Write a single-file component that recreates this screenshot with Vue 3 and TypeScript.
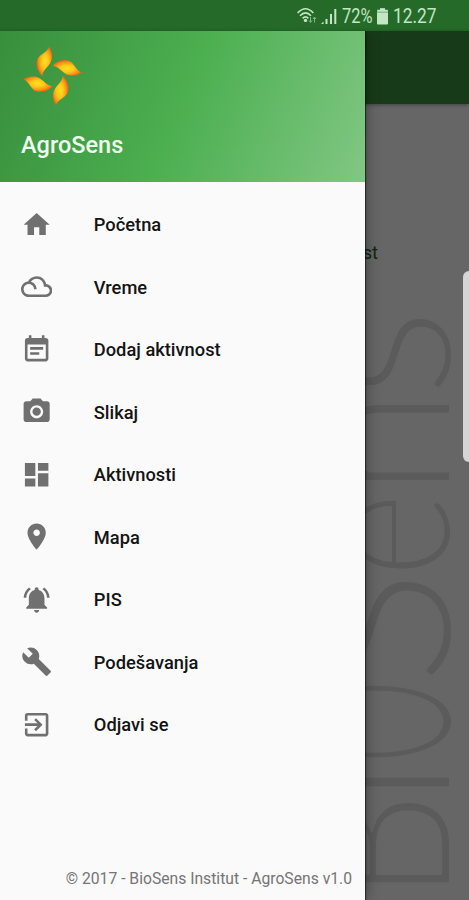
<script setup lang="ts">
interface MenuItem {
  label: string
  path: string
}

interface Mark {
  char: string
  start: number
  length: number
  size: number
}

const items: MenuItem[] = [
  { label: 'Početna', path: 'M10 20v-6h4v6h5v-8h3L12 3 2 12h3v8z' },
  {
    label: 'Vreme',
    path: 'M19.35 10.04C18.67 6.59 15.64 4 12 4 9.11 4 6.61 5.64 5.36 8.04 2.35 8.36 0 10.9 0 14c0 3.31 2.69 6 6 6h13c2.76 0 5-2.24 5-5 0-2.64-2.05-4.78-4.65-4.96zM19 18H6c-2.21 0-4-1.79-4-4s1.79-4 4-4 4 1.79 4 4h2c0-2.76-1.86-5.08-4.4-5.78C8.61 6.88 10.2 6 12 6c3.03 0 5.5 2.47 5.5 5.5v.5H19c1.65 0 3 1.35 3 3s-1.35 3-3 3z',
  },
  {
    label: 'Dodaj aktivnost',
    path: 'M14 14H7v2h7v-2zm5-11h-1V1h-2v2H8V1H6v2H5c-1.11 0-1.99.9-1.99 2L3 19c0 1.1.89 2 2 2h14c1.1 0 2-.9 2-2V5c0-1.1-.9-2-2-2zm0 16H5V8h14v11zm-2-9H7v2h10v-2z',
  },
  {
    label: 'Slikaj',
    path: 'M12 8.8a3.2 3.2 0 1 0 0 6.4 3.2 3.2 0 0 0 0-6.4zM9 2L7.17 4H4c-1.1 0-2 .9-2 2v12c0 1.1.9 2 2 2h16c1.1 0 2-.9 2-2V6c0-1.1-.9-2-2-2h-3.17L15 2H9zm3 15c-2.76 0-5-2.24-5-5s2.24-5 5-5 5 2.24 5 5-2.24 5-5 5z',
  },
  { label: 'Aktivnosti', path: 'M3 13h8V3H3v10zm0 8h8v-6H3v6zm10 0h8V11h-8v10zm0-18v6h8V3h-8z' },
  {
    label: 'Mapa',
    path: 'M12 2C8.13 2 5 5.13 5 9c0 5.25 7 13 7 13s7-7.75 7-13c0-3.87-3.13-7-7-7zm0 9.5c-1.38 0-2.5-1.12-2.5-2.5s1.12-2.5 2.5-2.5 2.5 1.12 2.5 2.5-1.12 2.5-2.5 2.5z',
  },
  {
    label: 'PIS',
    path: 'M7.58 4.08L6.15 2.65C3.75 4.48 2.17 7.3 2.03 10.5h2c.15-2.65 1.51-4.97 3.55-6.42zm12.39 6.42h2c-.15-3.2-1.73-6.02-4.12-7.85l-1.42 1.43c2.02 1.45 3.39 3.77 3.54 6.42zM18 11c0-3.07-1.64-5.64-4.5-6.32V4c0-.83-.67-1.5-1.5-1.5s-1.5.67-1.5 1.5v.68C7.63 5.36 6 7.92 6 11v5l-2 2v1h16v-1l-2-2v-5zm-6 11c1.1 0 2-.9 2-2h-4c0 1.1.9 2 2 2z',
  },
  {
    label: 'Podešavanja',
    path: 'M22.7 19l-9.1-9.1c.9-2.3.4-5-1.5-6.9-2-2-5-2.4-7.4-1.3L9 6 6 9 1.6 4.7C.4 7.1.9 10.1 2.9 12.1c1.9 1.9 4.6 2.4 6.9 1.5l9.1 9.1c.4.4 1 .4 1.4 0l2.3-2.3c.5-.4.5-1.1.1-1.4z',
  },
  {
    label: 'Odjavi se',
    path: 'M10.09 15.59L11.5 17l5-5-5-5-1.41 1.41L12.67 11H3v2h9.67l-2.58 2.59zM19 3H5c-1.11 0-2 .9-2 2v4h2V5h14v14H5v-4H3v4c0 1.1.89 2 2 2h14c1.1 0 2-.9 2-2V5c0-1.1-.9-2-2-2z',
  },
]

// Watermark letters; start is measured upwards from the bottom edge of the screen.
const marks: Mark[] = [
  { char: 'B', start: -1, length: 109, size: 215 },
  { char: 'I', start: 92, length: 52, size: 215 },
  { char: 'O', start: 136, length: 85, size: 215 },
  { char: 'S', start: 214, length: 117, size: 215 },
  { char: 'e', start: 322, length: 86, size: 195 },
  { char: 'n', start: 403, length: 108, size: 215 },
  { char: 's', start: 502, length: 90, size: 215 },
]

const petals: number[] = [0, 90, 180, 270]
</script>

<template>
  <div class="screen">
    <header class="status">
      <svg class="wifi" viewBox="0 0 20 18">
        <g fill="none" stroke="#c3e6c4" stroke-width="1.6">
          <path d="M.6 6Q8.500 -2.500 16.400 6" />
          <path d="M3 8.800Q8.500 3 14 8.800" />
          <path d="M5.600 11.400Q8.500 8.400 11.400 11.400" />
        </g>
        <circle cx="8.500" cy="13.400" r="1.700" fill="#c3e6c4" />
        <path d="M13.5 10v5M12 13.500l1.5 2 1.5-2M17.5 15.500v-5M16 12l1.500-2 1.500 2" fill="none" stroke="#80b982" />
      </svg>
      <svg class="signal" viewBox="0 0 16 17">
        <path d="M0 16h2.500v-2.500zM4.500 16h2v-5h-2zM9 16h2V6H9zM13.300 16h2V1h-2z" fill="#c3e6c4" />
      </svg>
      <span class="percent">72%</span>
      <svg class="battery" viewBox="0 0 11 17">
        <path d="M3 0h5v2h3v4H0V2h3z" fill="#8fbf91" />
        <path d="M3 .5h5v1.300h2.500V3.500H.5V1.800H3zM0 5h11v10.500a1 1 0 0 1-1 1H1a1 1 0 0 1-1-1z" fill="#c3e6c4" />
      </svg>
      <span class="clock">12.27</span>
    </header>

    <main class="stage">
      <section class="page">
        <div class="toolbar"></div>
        <div class="content">
          <p class="caption">Dodaj aktivnost</p>
        </div>
        <svg class="watermark" viewBox="0 0 469 900">
          <g transform="translate(450 900) rotate(-90)">
            <text
              v-for="(m, i) in marks"
              :key="i"
              :x="m.start"
              y="0"
              :font-size="m.size"
              :textLength="m.length"
              lengthAdjust="spacingAndGlyphs"
            >{{ m.char }}</text>
          </g>
        </svg>
        <div class="edge-handle"></div>
      </section>

      <aside class="drawer">
        <div class="banner">
          <svg class="logo" viewBox="0 0 62 62">
            <defs>
              <radialGradient id="petal" cx="0.55" cy="0.5" r="0.56">
                <stop offset="0" stop-color="#ffe11a" />
                <stop offset="0.4" stop-color="#ffc81a" />
                <stop offset="0.75" stop-color="#f98f14" />
                <stop offset="1" stop-color="#ec5a12" />
              </radialGradient>
            </defs>
            <path
              v-for="angle in petals"
              :key="angle"
              d="M28.300 1.500C31 7 32.300 13.500 29 18.500C26 23 22 25 21.300 31.300C17.500 27 14 21 16.300 14.500C18.500 9 26 8 28.300 1.500Z"
              fill="url(#petal)"
              :transform="`rotate(${angle} 31.5 31)`"
            />
          </svg>
          <h1 class="name">AgroSens</h1>
        </div>
        <nav class="menu">
          <a v-for="item in items" :key="item.label" class="item">
            <svg class="icon" viewBox="0 0 24 24"><path :d="item.path" /></svg>
            <span>{{ item.label }}</span>
          </a>
        </nav>
        <footer class="foot">© 2017 - BioSens Institut - AgroSens v1.0</footer>
      </aside>
    </main>
  </div>
</template>

<style>
body {
  margin: 0;
  overflow: hidden;
}
</style>

<style scoped>
.screen {
  width: 469px;
  height: 900px;
  display: flex;
  flex-direction: column;
  overflow: hidden;
  font-family: Roboto, "Noto Sans", sans-serif;
  background: #666;
}
.status {
  height: 31px;
  flex: none;
  box-sizing: border-box;
  padding: 1px 33px 0 0;
  display: flex;
  align-items: center;
  justify-content: flex-end;
  background: #256a29;
  color: #c3e6c4;
  font-size: 20px;
  line-height: 30px;
}
.wifi {
  width: 20px;
  height: 18px;
  margin-right: 4px;
}
.signal {
  width: 16px;
  height: 17px;
  margin-right: 5px;
}
.percent {
  width: 31px;
  white-space: nowrap;
  transform: scaleX(0.82);
  transform-origin: left;
}
.battery {
  width: 11px;
  height: 17px;
  margin: 0 5px 0 4px;
}
.clock {
  width: 43px;
  white-space: nowrap;
  transform: scaleX(0.865);
  transform-origin: left;
}
.stage {
  position: relative;
  flex: 1;
}
.page {
  height: 869px;
}
.toolbar {
  height: 73px;
  background: #173b19;
  box-shadow: 0 1px 4px rgba(0, 0, 0, 0.35);
}
.content {
  display: flex;
  justify-content: flex-end;
  padding: 138px 91px 0 0;
}
.caption {
  margin: 0;
  font-size: 18.2px;
  line-height: 22px;
  color: #10240f;
}
.watermark {
  position: absolute;
  left: 0;
  top: -31px;
  width: 469px;
  height: 900px;
  font-family: Lato, sans-serif;
  font-weight: 300;
  fill: #5b5b5b;
  stroke: #666;
  stroke-width: 2px;
}
.edge-handle {
  position: absolute;
  right: 0;
  top: 240px;
  width: 6px;
  height: 191px;
  border-radius: 6px 0 0 6px;
  background: #d5d5d5;
}
.drawer {
  position: absolute;
  left: 0;
  top: 0;
  width: 365px;
  height: 869px;
  box-sizing: border-box;
  display: flex;
  flex-direction: column;
  background: #fafafa;
  box-shadow: 0 0 14px rgba(0, 0, 0, 0.42), 1px 0 1px rgba(0, 0, 0, 0.5);
  clip-path: inset(0 -30px 0 0);
}
.banner {
  height: 151px;
  flex: none;
  box-sizing: border-box;
  padding: 14px 21px 0;
  background: linear-gradient(112.5deg, #388e3c, #4caf50 50%, #81c784);
}
.logo {
  display: block;
  width: 62px;
  height: 62px;
}
.name {
  margin: 24px 0 0;
  font-size: 23.5px;
  line-height: 28px;
  font-weight: 500;
  color: #efffef;
}
.menu {
  padding-top: 11.4px;
}
.item {
  height: 62.5px;
  display: flex;
  align-items: center;
  padding-left: 21px;
  font-size: 18.3px;
  font-weight: 500;
  color: #141414;
}
.icon {
  width: 31.3px;
  height: 31.3px;
  margin-right: 41.5px;
  fill: #707070;
}
.foot {
  margin-top: auto;
  padding: 0 13px 11px 0;
  text-align: right;
  font-size: 15.7px;
  line-height: 20px;
  color: #757575;
}
</style>
